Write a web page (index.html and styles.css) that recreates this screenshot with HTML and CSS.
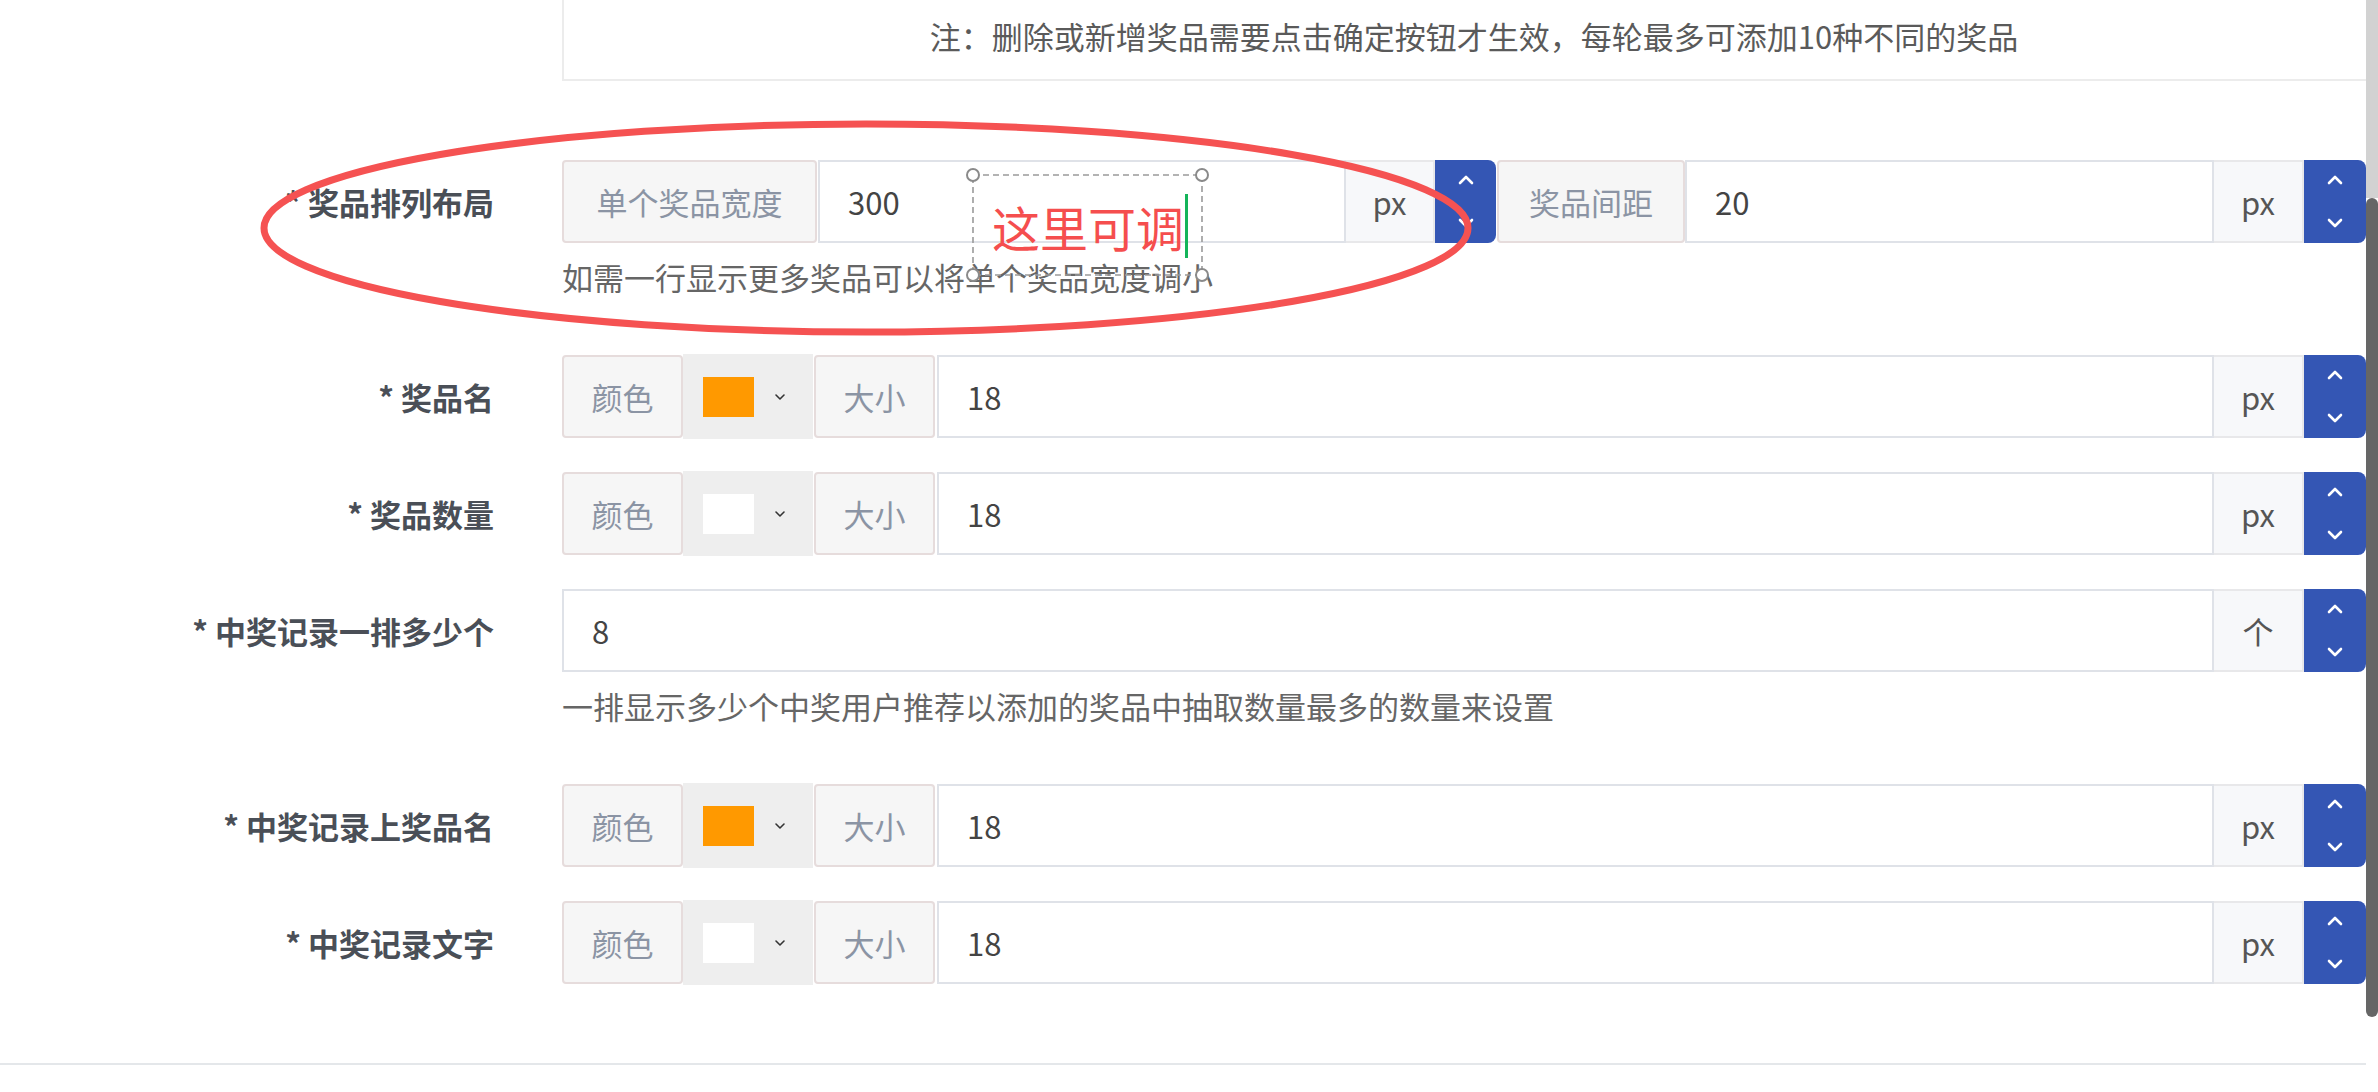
FILE: index.html
```html
<!DOCTYPE html>
<html lang="zh-CN">
<head>
<meta charset="utf-8">
<title>奖品设置</title>
<link rel="stylesheet" href="styles.css">
</head>
<body>
<div class="page">
  <div class="note">注：删除或新增奖品需要点击确定按钮才生效，每轮最多可添加10种不同的奖品</div>

  <div class="form">
    <div class="item">
      <div class="label">* 奖品排列布局</div>
      <div class="control">
        <div class="row">
          <div class="group group-a">
            <span class="addon addon-wide">单个奖品宽度</span>
            <span class="input">300</span>
            <span class="unit">px</span>
            <span class="spin">
              <svg class="chev" viewBox="0 0 16 10"><polyline points="2,8 8,2 14,8"/></svg>
              <svg class="chev" viewBox="0 0 16 10"><polyline points="2,2 8,8 14,2"/></svg>
            </span>
          </div>
          <div class="group group-b">
            <span class="addon addon-mid">奖品间距</span>
            <span class="input">20</span>
            <span class="unit">px</span>
            <span class="spin">
              <svg class="chev" viewBox="0 0 16 10"><polyline points="2,8 8,2 14,8"/></svg>
              <svg class="chev" viewBox="0 0 16 10"><polyline points="2,2 8,8 14,2"/></svg>
            </span>
          </div>
        </div>
        <div class="help">如需一行显示更多奖品可以将单个奖品宽度调小</div>
      </div>
    </div>

    <div class="item">
      <div class="label">* 奖品名</div>
      <div class="control">
        <div class="row">
          <span class="addon addon-small">颜色</span>
          <span class="picker"><span class="swatch swatch-orange"></span><svg class="caret" viewBox="0 0 12 8"><polyline points="2,2 6,6 10,2"/></svg></span>
          <span class="addon addon-small addon-size">大小</span>
          <span class="input">18</span>
          <span class="unit">px</span>
          <span class="spin">
            <svg class="chev" viewBox="0 0 16 10"><polyline points="2,8 8,2 14,8"/></svg>
            <svg class="chev" viewBox="0 0 16 10"><polyline points="2,2 8,8 14,2"/></svg>
          </span>
        </div>
      </div>
    </div>

    <div class="item">
      <div class="label">* 奖品数量</div>
      <div class="control">
        <div class="row">
          <span class="addon addon-small">颜色</span>
          <span class="picker"><span class="swatch swatch-white"></span><svg class="caret" viewBox="0 0 12 8"><polyline points="2,2 6,6 10,2"/></svg></span>
          <span class="addon addon-small addon-size">大小</span>
          <span class="input">18</span>
          <span class="unit">px</span>
          <span class="spin">
            <svg class="chev" viewBox="0 0 16 10"><polyline points="2,8 8,2 14,8"/></svg>
            <svg class="chev" viewBox="0 0 16 10"><polyline points="2,2 8,8 14,2"/></svg>
          </span>
        </div>
      </div>
    </div>

    <div class="item">
      <div class="label">* 中奖记录一排多少个</div>
      <div class="control">
        <div class="row">
          <span class="input input-first">8</span>
          <span class="unit">个</span>
          <span class="spin">
            <svg class="chev" viewBox="0 0 16 10"><polyline points="2,8 8,2 14,8"/></svg>
            <svg class="chev" viewBox="0 0 16 10"><polyline points="2,2 8,8 14,2"/></svg>
          </span>
        </div>
        <div class="help">一排显示多少个中奖用户推荐以添加的奖品中抽取数量最多的数量来设置</div>
      </div>
    </div>

    <div class="item">
      <div class="label">* 中奖记录上奖品名</div>
      <div class="control">
        <div class="row">
          <span class="addon addon-small">颜色</span>
          <span class="picker"><span class="swatch swatch-orange"></span><svg class="caret" viewBox="0 0 12 8"><polyline points="2,2 6,6 10,2"/></svg></span>
          <span class="addon addon-small addon-size">大小</span>
          <span class="input">18</span>
          <span class="unit">px</span>
          <span class="spin">
            <svg class="chev" viewBox="0 0 16 10"><polyline points="2,8 8,2 14,8"/></svg>
            <svg class="chev" viewBox="0 0 16 10"><polyline points="2,2 8,8 14,2"/></svg>
          </span>
        </div>
      </div>
    </div>

    <div class="item">
      <div class="label">* 中奖记录文字</div>
      <div class="control">
        <div class="row">
          <span class="addon addon-small">颜色</span>
          <span class="picker"><span class="swatch swatch-white"></span><svg class="caret" viewBox="0 0 12 8"><polyline points="2,2 6,6 10,2"/></svg></span>
          <span class="addon addon-small addon-size">大小</span>
          <span class="input">18</span>
          <span class="unit">px</span>
          <span class="spin">
            <svg class="chev" viewBox="0 0 16 10"><polyline points="2,8 8,2 14,8"/></svg>
            <svg class="chev" viewBox="0 0 16 10"><polyline points="2,2 8,8 14,2"/></svg>
          </span>
        </div>
      </div>
    </div>
  </div>

  <div class="footer-line"></div>

  <svg class="annot" viewBox="0 0 2378 1092" width="2378" height="1092">
    <ellipse cx="866" cy="228" rx="602" ry="104" class="ring"/>
    <rect x="973" y="175" width="229" height="100" class="dash"/>
    <circle cx="973" cy="175" r="6" class="handle"/>
    <circle cx="1202" cy="175" r="6" class="handle"/>
    <circle cx="973" cy="275" r="6" class="handle"/>
    <circle cx="1202" cy="275" r="6" class="handle"/>
  </svg>
  <div class="annot-text">这里可调<span class="cursor"></span></div>

  <div class="scrollbar"><div class="thumb"></div></div>
</div>
</body>
</html>
```

FILE: styles.css
```css
* { box-sizing: border-box; }

html, body {
  margin: 0;
  padding: 0;
  background: #ffffff;
  overflow: hidden;
}

body {
  font-family: "Noto Sans CJK SC", "Noto Sans", sans-serif;
  font-size: 31px;
  color: #555;
}

.page {
  position: relative;
  width: 2378px;
  height: 1092px;
  overflow: hidden;
}

.note {
  margin-left: 562px;
  width: 1804px;
  height: 81px;
  border-left: 2px solid #ececec;
  border-bottom: 2px solid #ececec;
  display: flex;
  align-items: center;
  justify-content: center;
  padding-bottom: 8px;
  padding-left: 18px;
  color: #5a5a5a;
  line-height: 1;
  white-space: nowrap;
}

.form {
  padding-top: 79px;
}

.item {
  display: grid;
  grid-template-columns: 494px 1804px;
  column-gap: 68px;
  margin-bottom: 34px;
}

.label {
  height: 83px;
  line-height: 83px;
  text-align: right;
  font-weight: 700;
  color: #4a4f57;
  white-space: nowrap;
}

.control {
  display: flex;
  flex-direction: column;
}

.row {
  display: flex;
  height: 83px;
  align-items: stretch;
}

.group {
  display: flex;
  align-items: stretch;
}

.group-a { width: 934px; }
.group-b { flex: 1; margin-left: 1px; }

.addon {
  display: flex;
  align-items: center;
  justify-content: center;
  background: #f6f6f6;
  border: 2px solid #e6dcdc;
  border-radius: 4px;
  color: #8b94a4;
  white-space: nowrap;
}

.addon-wide { width: 255px; }
.addon-mid { width: 188px; }
.addon-small { width: 121px; }
.addon-size { margin-left: 1px; }

.input {
  flex: 1;
  display: flex;
  align-items: center;
  padding-left: 28px;
  border: 2px solid #dfe2e8;
  background: #fff;
  color: #444;
}

.addon-size + .input { margin-left: 2px; }
.addon-wide + .input { margin-left: 1px; }

.unit {
  width: 90px;
  display: flex;
  align-items: center;
  justify-content: center;
  background: #f7f8fa;
  border: 2px solid #e8e8ea;
  border-left: none;
  color: #555;
}

.group-a .unit { width: 89px; }

.spin {
  width: 62px;
  background: #3456b4;
  border-radius: 0 8px 8px 0;
  display: flex;
  flex-direction: column;
  align-items: center;
  justify-content: space-between;
  padding: 15px 0 15px;
}

.group-a .spin { width: 61px; }

.chev {
  width: 16px;
  height: 10px;
  display: block;
}

.chev polyline {
  fill: none;
  stroke: #ffffff;
  stroke-width: 2.6;
  stroke-linecap: round;
  stroke-linejoin: round;
}

.picker {
  width: 130px;
  background: #eeeeee;
  display: flex;
  align-items: center;
  padding-left: 20px;
  margin: -1px 0;
}

.swatch {
  width: 51px;
  height: 40px;
  display: block;
}

.swatch-orange { background: #ff9900; }
.swatch-white { background: #ffffff; }

.caret {
  width: 12px;
  height: 8px;
  margin-left: 20px;
  display: block;
}

.caret polyline {
  fill: none;
  stroke: #333;
  stroke-width: 1.6;
  stroke-linecap: round;
  stroke-linejoin: round;
}

.help {
  margin-top: 11px;
  margin-bottom: 21px;
  line-height: 46px;
  height: 46px;
  color: #666;
  white-space: nowrap;
}

.footer-line {
  margin-top: 79px;
  height: 2px;
  width: 2366px;
  background: #e4e7ea;
}

.annot {
  position: absolute;
  left: 0;
  top: 0;
  pointer-events: none;
}

.ring {
  fill: none;
  stroke: #f55252;
  stroke-width: 7;
}

.dash {
  fill: none;
  stroke: #9a9a9a;
  stroke-width: 1.6;
  stroke-dasharray: 6 4;
}

.handle {
  fill: #ffffff;
  stroke: #8a8a8a;
  stroke-width: 2;
}

.annot-text {
  position: absolute;
  left: 992px;
  top: 194px;
  height: 64px;
  font-size: 48px;
  line-height: 64px;
  color: #f54e4e;
  white-space: nowrap;
  display: flex;
  align-items: center;
}

.cursor {
  display: inline-block;
  width: 3px;
  height: 64px;
  background: #14b45a;
  margin-left: 1px;
}

.scrollbar {
  position: absolute;
  right: 0;
  top: 0;
  width: 12px;
  height: 1092px;
  background: linear-gradient(#d2d2d2 0, #d2d2d2 198px, #ffffff 198px);
}

.thumb {
  position: absolute;
  left: 0;
  top: 198px;
  width: 12px;
  height: 819px;
  background: #666666;
  border-radius: 6px;
}
```
